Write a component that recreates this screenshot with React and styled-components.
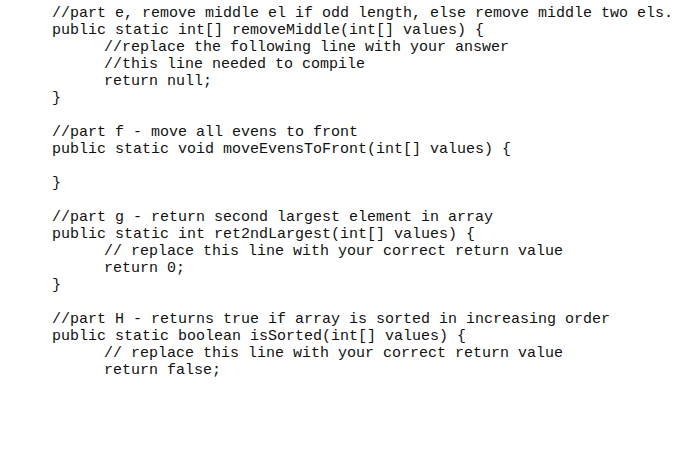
import React from "react";
import styled, { createGlobalStyle } from "styled-components";

const GlobalStyle = createGlobalStyle`
body {
  margin: 0;
  background: #fff;
}
`;

const lines = [
  [0, "//part e, remove middle el if odd length, else remove middle two els."],
  [0, "public static int[] removeMiddle(int[] values) {"],
  [1, "//replace the following line with your answer"],
  [1, "//this line needed to compile"],
  [1, "return null;"],
  [0, "}"],
  [0, ""],
  [0, "//part f - move all evens to front"],
  [0, "public static void moveEvensToFront(int[] values) {"],
  [0, ""],
  [0, "}"],
  [0, ""],
  [0, "//part g - return second largest element in array"],
  [0, "public static int ret2ndLargest(int[] values) {"],
  [1, "// replace this line with your correct return value"],
  [1, "return 0;"],
  [0, "}"],
  [0, ""],
  [0, "//part H - returns true if array is sorted in increasing order"],
  [0, "public static boolean isSorted(int[] values) {"],
  [1, "// replace this line with your correct return value"],
  [1, "return false;"],
];

export default function App() {
  return (
    <>
      <GlobalStyle />
      <Listing>
        {lines.map(([indent, text], i) => (
          <Line key={i} $indent={indent}>{text}</Line>
        ))}
      </Listing>
    </>
  );
}

const Listing = styled.div`
padding: 5px 0 0 52px;
font-family: "Liberation Mono", monospace;
font-size: 15px;
color: #111;
`

const Line = styled.div`
height: 17px;
line-height: 17px;
white-space: pre;
padding-left: ${(p) => p.$indent * 52}px;
`
